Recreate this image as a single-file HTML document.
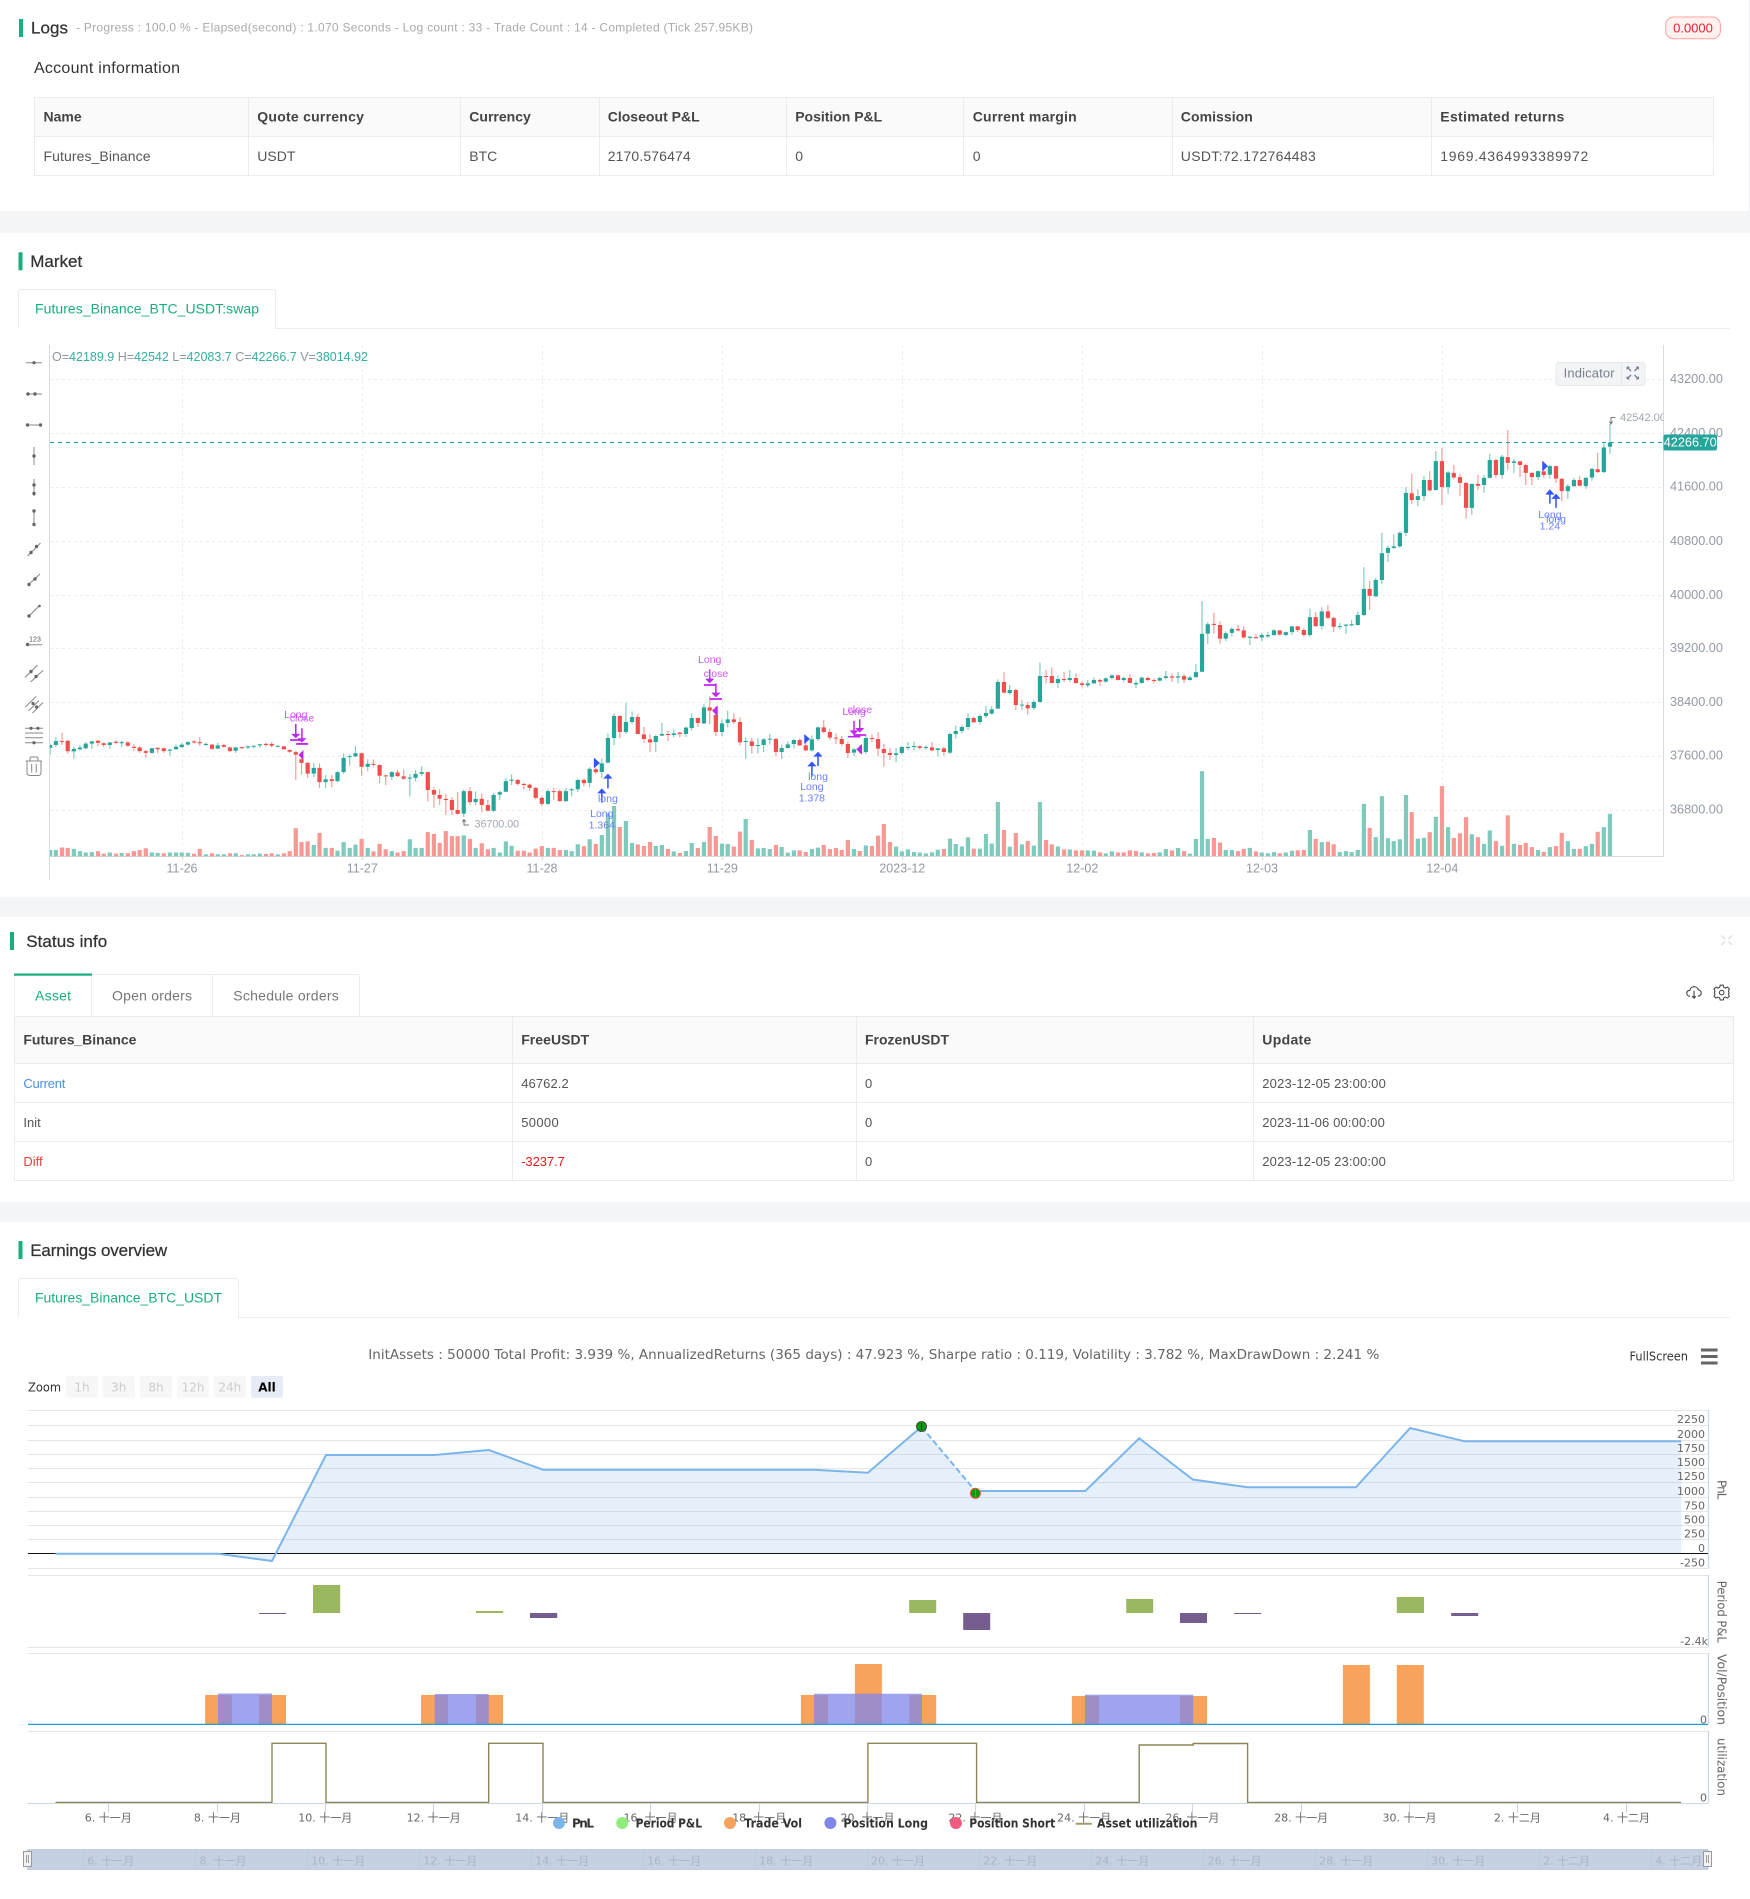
<!DOCTYPE html>
<html lang="en"><head><meta charset="utf-8"><title>Backtest</title>
<style>
html,body{margin:0;padding:0;background:#fff;width:1750px;height:1899px;overflow:hidden}
svg{display:block}
text{dominant-baseline:central;font-family:"Liberation Sans","Noto Sans CJK SC",sans-serif}
.h{font-family:"DejaVu Sans","Noto Sans CJK SC",sans-serif}
.t{font-size:17px;fill:#333;stroke:#333;stroke-width:.25px}
.th{font-size:14px;font-weight:700;fill:#444;transform:translateY(-.8px)}
.td{font-size:14px;fill:#555;transform:translateY(-.5px)}
.sd{font-size:13px;fill:#555}
.px{font-size:12.7px;fill:#929aa5}
.tk{font-size:12.5px;fill:#929aa5}
.sg{font-size:10.5px;text-anchor:middle}
.pu{fill:#cf55f5}.bl{fill:#6a80ff}
.yl{font-size:11px;fill:#666;text-anchor:end;transform:translateY(.6px)}
.xl{font-size:11px;fill:#666;text-anchor:middle}
.nl{font-size:11px;fill:#a9b4c7}
.lg{font-size:12px;font-weight:700;fill:#333}
.at{font-size:12px;fill:#666;text-anchor:middle}
.zb{font-size:12px;fill:#ccc;text-anchor:middle}
</style></head><body>
<svg width="1750" height="1899" viewBox="0 0 1750 1899" xmlns="http://www.w3.org/2000/svg">
<rect width="1750" height="1899" fill="#fff"/>
<rect y="212" width="1750" height="21" fill="#f4f5f7"/>
<rect y="897" width="1750" height="20" fill="#f4f5f7"/>
<rect y="1202" width="1750" height="20" fill="#f4f5f7"/>
<path d="M1749.5 0V212M0 212H1750" stroke="#eceef1" fill="none"/>

<!-- Logs -->
<rect x="19" y="19" width="4" height="18" fill="#1aae7f"/>
<text x="31" y="28" class="t" textLength="37">Logs</text>
<text x="76" y="27.5" font-size="12" fill="#aaa" textLength="677">- Progress : 100.0 % - Elapsed(second) : 1.070  Seconds - Log count : 33 - Trade Count : 14 - Completed (Tick 257.95KB)</text>
<rect x="1665.7" y="17" width="54.7" height="21.7" rx="8" fill="#fff1f0" stroke="#ffa39e"/>
<text x="1693" y="27.8" font-size="13" fill="#e8202f" text-anchor="middle">0.0000</text>
<text x="34" y="68.3" font-size="16" fill="#333" textLength="146">Account information</text>

<rect x="34.5" y="97.5" width="1679" height="39" fill="#fafafa"/>
<path d="M34.5 97.5H1713.5V175.5H34.5ZM34.5 136.5H1713.5M248.5 97.5V175.5M460.5 97.5V175.5M599.5 97.5V175.5M786.5 97.5V175.5M963.5 97.5V175.5M1172.5 97.5V175.5M1431.5 97.5V175.5" fill="none" stroke="#ececec"/>
<text x="43.5" y="117.3" class="th">Name</text>
<text x="257.3" y="117.3" class="th" textLength="106.6">Quote currency</text>
<text x="469.3" y="117.3" class="th">Currency</text>
<text x="607.7" y="117.3" class="th" textLength="92">Closeout P&amp;L</text>
<text x="795.2" y="117.3" class="th" textLength="87">Position P&amp;L</text>
<text x="972.7" y="117.3" class="th" textLength="104">Current margin</text>
<text x="1180.8" y="117.3" class="th" textLength="72">Comission</text>
<text x="1440.3" y="117.3" class="th" textLength="124">Estimated returns</text>
<text x="43.5" y="156.3" class="td" textLength="107">Futures_Binance</text>
<text x="257.3" y="156.3" class="td">USDT</text>
<text x="469.3" y="156.3" class="td">BTC</text>
<text x="607.7" y="156.3" class="td" textLength="83">2170.576474</text>
<text x="795.2" y="156.3" class="td">0</text>
<text x="972.7" y="156.3" class="td">0</text>
<text x="1180.8" y="156.3" class="td" textLength="135">USDT:72.172764483</text>
<text x="1440.3" y="156.3" class="td" textLength="148">1969.4364993389972</text>

<!-- Market -->
<rect x="18.5" y="252.3" width="4" height="18" fill="#1aae7f"/>
<text x="30.2" y="261.5" class="t" textLength="52">Market</text>
<path d="M18.5 328.5V292.5Q18.5 289.5 21.5 289.5H272.5Q275.5 289.5 275.5 292.5V328.5H1730" fill="none" stroke="#ececec"/>
<text x="35" y="308.6" font-size="14" fill="#1aae7f" textLength="224">Futures_Binance_BTC_USDT:swap</text>

<!-- chart grid -->
<path d="M50 379.5H1664M50 433.5H1664M50 487.5H1664M50 541.5H1664M50 595.5H1664M50 648.5H1664M50 702.5H1664M50 756.5H1664M50 810.5H1664M182.5 345V856M362.5 345V856M542.5 345V856M722.5 345V856M902.5 345V856M1082.5 345V856M1262.5 345V856M1442.5 345V856" stroke="#eeeeee" stroke-dasharray="3 3" fill="none"/>
<path d="M1663.5 345V856M50 856.5H1664" stroke="#d9dadd" fill="none"/>
<path d="M182.5 856V860M362.5 856V860M542.5 856V860M722.5 856V860M902.5 856V860M1082.5 856V860M1262.5 856V860M1442.5 856V860" stroke="#d9dadd"/>
<g text-anchor="middle">
<text x="182" y="868.6" class="tk">11-26</text><text x="362.3" y="868.6" class="tk">11-27</text><text x="542" y="868.6" class="tk">11-28</text><text x="722.3" y="868.6" class="tk">11-29</text><text x="902.3" y="868.6" class="tk">2023-12</text><text x="1082.3" y="868.6" class="tk">12-02</text><text x="1262" y="868.6" class="tk">12-03</text><text x="1442.3" y="868.6" class="tk">12-04</text>
</g>
<text x="1670" y="378.9" class="px">43200.00</text><text x="1670" y="432.9" class="px">42400.00</text><text x="1670" y="486.7" class="px">41600.00</text><text x="1670" y="541" class="px">40800.00</text><text x="1670" y="594.9" class="px">40000.00</text><text x="1670" y="647.8" class="px">39200.00</text><text x="1670" y="702.1" class="px">38400.00</text><text x="1670" y="755.7" class="px">37600.00</text><text x="1670" y="809.6" class="px">36800.00</text>

<!-- candles part 1 -->
<g transform="translate(0 340) scale(.38265 .35714)" fill="none">
<path stroke="#7fcabd" stroke-width="11" d="M131 1446V1428M146 1446V1428M193 1446V1425M209 1446V1431M224 1446V1435M240 1446V1434M287 1446V1435M318 1446V1436M397 1446V1435M412 1446V1436M444 1446V1435M460 1446V1435M475 1446V1435M491 1446V1436M538 1446V1440M569 1446V1440M585 1446V1440M616 1446V1437M648 1446V1440M663 1446V1440M679 1446V1438M726 1446V1440M820 1446V1414M851 1446V1422M882 1446V1430M898 1446V1406M914 1446V1422M929 1446V1413M961 1446V1422M1024 1446V1431M1071 1446V1398M1086 1446V1422M1102 1446V1422M1212 1446V1387M1243 1446V1422M1290 1446V1422M1306 1446V1435M1322 1446V1404M1337 1446V1416M1432 1446V1422M1479 1446V1428M1494 1446V1431M1510 1446V1412M1541 1446V1398"/>
<path stroke="#f69995" stroke-width="11" d="M162 1446V1421M177 1446V1422M256 1446V1431M271 1446V1438M303 1446V1438M334 1446V1437M350 1446V1431M365 1446V1428M381 1446V1423M428 1446V1437M507 1446V1438M522 1446V1425M554 1446V1437M601 1446V1437M632 1446V1442M695 1446V1439M710 1446V1437M742 1446V1437M757 1446V1431M773 1446V1367M788 1446V1406M804 1446V1404M835 1446V1380M867 1446V1422M945 1446V1397M976 1446V1432M992 1446V1411M1008 1446V1426M1039 1446V1435M1055 1446V1431M1118 1446V1378M1134 1446V1383M1149 1446V1408M1165 1446V1375M1181 1446V1389M1196 1446V1389M1228 1446V1397M1259 1446V1409M1275 1446V1426M1353 1446V1430M1369 1446V1430M1384 1446V1435M1400 1446V1424M1416 1446V1417M1447 1446V1422M1463 1446V1428M1526 1446V1417M1557 1446V1411"/>
<path stroke="#7fcabd" stroke-width="3" d="M131 1130V1162M146 1112V1140M193 1140V1172M209 1134V1150M224 1126V1146M240 1122V1145M287 1126V1144M318 1122V1140M397 1142V1158M444 1145V1165M460 1133V1148M475 1128V1141M491 1123V1136M538 1128V1137M569 1128V1146M616 1139V1156M648 1136V1146M663 1135V1144M679 1131V1142M726 1135V1141M820 1184V1224M851 1218V1254M882 1207V1238M898 1158V1214M914 1160V1192M929 1137V1168M961 1174V1207M1024 1207V1232M1071 1216V1278M1086 1204V1236M1102 1193V1220M1212 1258V1336M1243 1264V1302M1290 1268V1322M1306 1262V1288M1322 1226V1266M1337 1216V1246M1432 1258V1302M1479 1254V1294M1494 1254V1278M1510 1228V1266M1541 1196V1252"/>
<path stroke="#f69995" stroke-width="3" d="M162 1100V1134M177 1120V1158M256 1120V1138M271 1127V1140M303 1122V1132M334 1123V1139M350 1132V1150M365 1138V1156M381 1148V1170M412 1140V1156M428 1141V1156M507 1120V1130M522 1112V1136M554 1131V1148M585 1131V1142M601 1138V1154M632 1140V1146M695 1128V1138M710 1126V1140M742 1136V1148M757 1146V1156M773 1150V1232M788 1170V1216M804 1182V1226M835 1186V1254M867 1218V1252M945 1155V1221M976 1174V1195M992 1188V1240M1008 1218V1246M1039 1204V1224M1055 1202V1232M1118 1208V1292M1134 1252V1310M1149 1258V1302M1165 1270V1330M1181 1280V1330M1196 1266V1329M1228 1252V1302M1259 1270V1322M1275 1288V1320M1353 1228V1248M1369 1240V1258M1384 1242V1262M1400 1252V1286M1416 1278V1306M1447 1254V1288M1463 1258V1292M1526 1226V1250M1557 1198V1216"/>
<path stroke="#26a69a" stroke-width="11" d="M131 1134V1142M146 1123V1134M193 1145V1152M209 1141V1146M224 1130V1143M240 1124V1130M287 1127V1134M318 1126V1129M397 1143V1156M444 1147V1150M460 1139V1146M475 1133V1140M491 1126V1133M538 1131V1134M569 1135V1144M616 1141V1150M648 1138V1141M663 1136V1139M679 1132V1135M726 1136V1139M820 1198V1214M851 1230V1238M882 1210V1235M898 1170V1210M914 1165V1168M929 1157V1166M961 1187V1195M1024 1210V1223M1071 1225V1228M1086 1215V1226M1102 1210V1215M1212 1263V1326M1243 1285V1294M1290 1274V1318M1306 1266V1273M1322 1235V1265M1337 1231V1234M1432 1263V1299M1479 1263V1291M1494 1258V1261M1510 1232V1258M1541 1201V1240"/>
<path stroke="#ef4f4c" stroke-width="11" d="M162 1123V1126M177 1122V1151M256 1122V1128M271 1129V1134M303 1125V1128M334 1127V1136M350 1139V1142M365 1141V1151M381 1151V1156M412 1142V1146M428 1143V1151M507 1124V1127M522 1126V1129M554 1133V1145M585 1134V1139M601 1141V1151M632 1140V1143M695 1131V1134M710 1131V1136M742 1138V1146M757 1148V1153M773 1154V1161M788 1174V1184M804 1184V1214M835 1198V1238M867 1230V1235M945 1157V1195M976 1187V1190M992 1190V1220M1008 1219V1222M1039 1211V1221M1055 1222V1228M1118 1210V1260M1134 1260V1273M1149 1274V1284M1165 1285V1288M1181 1288V1316M1196 1316V1327M1228 1263V1294M1259 1285V1302M1275 1302V1318M1353 1232V1243M1369 1243V1246M1384 1245V1254M1400 1254V1282M1416 1282V1299M1447 1263V1266M1463 1263V1291M1526 1232V1241M1557 1202V1210"/>
<path stroke="#c026ee" stroke-width="4" d="M773 1075V1105M789 1087V1117"/><path stroke="#c026ee" stroke-width="5" d="M758 1120H790M774 1131H805"/>
<path fill="#c026ee" d="M761 1103H785L773 1115ZM777 1115H801L789 1127ZM780 1162L793 1148V1176Z"/>
<path fill="#3355ff" d="M1552 1169L1566 1184L1552 1199Z"/>
</g>

<!-- candles part 2 -->
<g transform="translate(580 600) scale(.38265 .33333)" fill="none">
<path stroke="#7fcabd" stroke-width="11" d="M57 768V705M73 768V640M89 768V618M120 768V663M136 768V729M198 768V738M214 768V735M245 768V754M277 768V753M292 768V729M324 768V726M371 768V731M386 768V732M433 768V657M465 768V745M480 768V744M496 768V747M527 768V741M543 768V758M559 768V751M606 768V747M622 768V743M716 768V747M747 768V736M826 768V740M841 768V754M857 768V748M873 768V756M888 768V758M904 768V760M920 768V757M935 768V749M967 768V716M982 768V732M998 768V739M1014 768V712M1045 768V746M1061 768V702M1076 768V731M1092 768V606M1123 768V740M1155 768V733M1186 768V737M1202 768V606M1249 768V739M1280 768V748M1327 768V751M1343 768V752M1374 768V760M1390 768V754M1468 768V757M1515 768V757M1531 768V747M1563 768V744"/>
<path stroke="#f69995" stroke-width="11" d="M104 768V681M151 768V733M167 768V738M183 768V726M230 768V747M261 768V759M308 768V744M339 768V681M355 768V708M402 768V740M418 768V695M449 768V720M512 768V735M574 768V751M590 768V756M637 768V735M653 768V747M669 768V744M684 768V750M700 768V720M731 768V753M763 768V738M779 768V707M794 768V672M810 768V726M951 768V747M1029 768V746M1108 768V690M1139 768V699M1170 768V723M1218 768V720M1233 768V733M1265 768V748M1296 768V751M1312 768V751M1359 768V757M1406 768V757M1421 768V757M1437 768V751M1453 768V753M1484 768V760M1500 768V759M1547 768V751"/>
<path stroke="#7fcabd" stroke-width="3" d="M57 475V535M73 400V490M89 340V435M120 308V402M136 334V372M198 405V456M214 369V408M245 388V412M277 380V411M292 340V392M324 312V372M371 358V408M386 332V382M433 412V476M465 414V460M480 414V456M496 402V434M527 434V477M543 424V446M559 417V445M606 406V455M622 380V423M716 444V468M747 404V462M826 444V486M841 437V464M857 426V450M873 424V452M904 436V450M935 445V470M967 398V462M982 376V416M998 376V400M1014 340V390M1045 343V374M1061 318V354M1076 318V344M1092 238V326M1123 255V284M1155 300V330M1186 300V330M1202 188V308M1249 226V264M1280 210V246M1327 240V262M1343 232V252M1374 232V248M1390 224V238M1421 230V246M1453 242V264M1468 230V250M1515 230V244M1531 213V238M1563 216V250"/>
<path stroke="#f69995" stroke-width="3" d="M104 345V415M151 342V402M167 381V428M183 403V456M230 393V423M261 396V412M308 352V381M339 288V372M355 320V408M402 340V372M418 352V436M449 414V460M512 414V468M574 416V438M590 418V454M637 360V400M653 386V420M669 400V432M684 408V438M700 425V474M731 435V460M763 403V426M779 396V468M794 432V500M810 444V480M888 436V448M920 426V454M951 440V468M1029 350V368M1108 216V280M1139 266V330M1170 306V344M1218 210V250M1233 202V250M1265 216V246M1296 220V252M1312 244V262M1359 236V258M1406 224V242M1437 222V250M1484 230V244M1500 235V250M1547 220V246"/>
<path stroke="#26a69a" stroke-width="11" d="M57 490V516M73 414V488M89 348V414M120 366V396M136 351V366M198 408V426M214 402V407M245 400V405M277 383V402M292 354V384M324 322V370M371 370V396M386 358V369M433 423V426M465 435V438M480 418V435M496 416V419M527 444V456M543 433V444M559 420V432M606 418V451M622 382V417M716 448V458M747 414V456M826 460V465M841 441V459M857 441V444M873 438V441M904 441V444M935 445V450M967 402V458M982 393V402M998 381V393M1014 354V381M1045 348V366M1061 339V348M1076 328V341M1092 246V326M1123 270V279M1155 314V317M1186 306V324M1202 228V306M1249 237V249M1280 234V240M1327 250V256M1343 240V250M1374 235V245M1390 226V234M1421 234V240M1453 249V253M1468 233V249M1515 234V242M1531 229V234M1563 229V233"/>
<path stroke="#ef4f4c" stroke-width="11" d="M104 348V396M151 351V402M167 403V417M183 418V427M230 402V405M261 398V402M308 354V369M339 322V332M355 345V396M402 358V366M418 366V427M449 424V438M512 417V456M574 420V436M590 436V451M637 382V396M653 396V413M669 413V416M684 417V432M700 432V459M731 445V448M763 414V417M779 417V446M794 447V459M810 459V465M888 439V444M920 442V451M951 445V456M1029 354V367M1108 246V278M1139 270V315M1170 315V325M1218 228V231M1233 228V249M1265 237V240M1296 234V249M1312 250V255M1359 240V245M1406 226V240M1437 234V249M1484 234V240M1500 240V243M1547 229V233"/>
<path stroke="#c026ee" stroke-width="4" d="M339 208V238M355 250V280M716 363V393M731 358V386"/><path stroke="#c026ee" stroke-width="5" d="M324 255H356M339 297H371M700 410H733M715 405H747"/>
<path fill="#c026ee" d="M327 236H351L339 250ZM343 278H367L355 292ZM704 391H728L716 405ZM719 384H743L731 398ZM345 332L360 316V349ZM722 448L737 432V464Z"/>
<path stroke="#3355ff" stroke-width="4" d="M73 533V565M57 577V608M622 467V498M606 496V530"/>
<path fill="#3355ff" d="M73 521L85 536H61ZM57 565L69 580H45ZM622 455L634 470H610ZM606 484L618 499H594ZM37 474L52 489L37 504ZM586 402L601 417L586 432Z"/>
</g>

<!-- candles part 3 -->
<g transform="translate(1150 340) scale(.38265 .35714)" fill="none">
<path stroke="#7fcabd" stroke-width="11" d="M104 1445V1438M120 1445V1397M136 1445V1207M151 1445V1397M198 1445V1428M214 1445V1428M261 1445V1422M292 1445V1435M308 1445V1437M324 1445V1434M355 1445V1435M371 1445V1430M418 1445V1372M449 1445V1406M496 1445V1434M512 1445V1431M527 1445V1434M543 1445V1428M559 1445V1299M590 1445V1392M606 1445V1277M622 1445V1395M637 1445V1403M653 1445V1398M669 1445V1274M700 1445V1396M716 1445V1394M747 1445V1335M779 1445V1364M841 1445V1384M873 1445V1411M888 1445V1373M920 1445V1416M951 1445V1411M1014 1445V1428M1045 1445V1420M1092 1445V1403M1108 1445V1425M1139 1445V1417M1155 1445V1411M1186 1445V1364M1202 1445V1327"/>
<path stroke="#f69995" stroke-width="11" d="M89 1445V1431M167 1445V1394M183 1445V1407M230 1445V1431M245 1445V1425M277 1445V1432M339 1445V1437M386 1445V1429M402 1445V1428M433 1445V1397M465 1445V1405M480 1445V1412M574 1445V1366M684 1445V1322M731 1445V1378M763 1445V1249M794 1445V1394M810 1445V1381M826 1445V1336M857 1445V1392M904 1445V1403M935 1445V1331M967 1445V1414M982 1445V1408M998 1445V1420M1029 1445V1433M1061 1445V1417M1076 1445V1380M1123 1445V1425M1170 1445V1377"/>
<path stroke="#7fcabd" stroke-width="3" d="M104 940V954M120 907V946M136 731V930M151 790V851M198 816V843M214 804V830M261 829V854M292 820V843M308 818V834M324 809V829M355 816V830M371 800V826M418 752V832M449 748V811M496 792V810M512 795V823M527 784V802M543 760V800M559 636V773M590 666V720M606 540V684M622 576V622M637 544V586M653 536V582M669 412V548M700 418V465M716 381V451M747 311V422M779 367V431M841 402V490M873 378V428M888 319V388M920 322V388M951 333V372M1014 366V392M1045 350V388M1092 404V445M1108 386V412M1139 384V417M1155 358V394M1186 288V372M1202 235V319"/>
<path stroke="#f69995" stroke-width="3" d="M89 935V960M167 764V822M183 788V851M230 798V816M245 802V836M277 823V836M339 813V828M386 800V818M402 806V831M433 762V804M465 742V782M480 776V818M574 675V756M684 375V458M731 367V424M763 302V462M794 350V390M810 375V437M826 398V500M857 378V420M904 332V386M935 252V364M967 338V384M982 346V406M998 370V406M1029 340V386M1061 352V400M1076 386V451M1123 381V410M1170 316V372"/>
<path stroke="#26a69a" stroke-width="11" d="M104 945V952M120 930V944M136 823V929M151 796V822M198 821V836M214 809V820M261 831V834M292 826V833M308 826V830M324 813V826M355 818V826M371 802V818M418 776V826M449 760V801M496 801V804M512 797V800M527 796V799M543 770V798M559 697V770M590 672V718M606 597V672M622 582V596M637 578V582M653 540V578M669 428V540M700 437V448M716 392V437M747 339V420M779 371V412M841 403V470M873 386V406M888 336V386M920 327V378M951 340V344M1014 367V384M1045 353V377M1092 409V423M1108 392V409M1139 386V409M1155 361V385M1186 301V370M1202 287V299"/>
<path stroke="#ef4f4c" stroke-width="11" d="M89 941V951M167 795V798M183 798V836M230 809V813M245 813V833M277 832V835M339 813V825M386 802V812M402 812V826M433 776V801M465 760V778M480 778V803M574 697V716M684 429V448M731 392V421M763 339V412M794 372V385M810 384V400M826 400V470M857 403V408M904 336V378M935 328V344M967 340V350M982 350V372M998 372V384M1029 368V378M1061 353V388M1076 389V423M1123 392V408M1170 362V370"/>
<path stroke="#3355ff" stroke-width="4" d="M1045 430V458M1061 442V470"/>
<path fill="#3355ff" d="M1045 418L1057 433H1033ZM1061 430L1073 445H1049ZM1025 338L1040 353L1025 368Z"/>
</g>

<!-- left axis covers overflow -->
<rect x="44" y="345" width="5.5" height="515" fill="#fff"/>
<path d="M49.5 345V880" stroke="#d9dadd" fill="none"/>

<!-- price marks & signal text -->
<path d="M50 442.5H1664" stroke="#26a69a" stroke-dasharray="4 4"/>
<rect x="1663.5" y="434.5" width="53.5" height="16" rx="2" fill="#26a69a"/>
<text x="1690.2" y="442.5" font-size="12.7" fill="#fff" text-anchor="middle">42266.70</text>
<path d="M1615.5 417.5H1611V423M1609.3 421.5L1611 424L1612.7 421.5" fill="none" stroke="#777"/>
<svg x="1620" y="410" width="43.5" height="16"><text x="0" y="8" font-size="11" fill="#a0a7b1">42542.00</text></svg>
<path d="M464 820V825H469M462.3 822L464 819.5L465.7 822" fill="none" stroke="#777"/>
<text x="474.5" y="824.3" font-size="10.7" fill="#a0a7b1">36700.00</text>
<text x="52" y="356.8" font-size="12.5" textLength="316"><tspan fill="#8d96a1">O=</tspan><tspan fill="#35ad9f">42189.9 </tspan><tspan fill="#8d96a1">H=</tspan><tspan fill="#35ad9f">42542 </tspan><tspan fill="#8d96a1">L=</tspan><tspan fill="#35ad9f">42083.7 </tspan><tspan fill="#8d96a1">C=</tspan><tspan fill="#35ad9f">42266.7 </tspan><tspan fill="#8d96a1">V=</tspan><tspan fill="#35ad9f">38014.92</tspan></text>
<rect x="1556" y="362.5" width="89" height="23" rx="3" fill="#f3f4f6" stroke="#e6e7ea"/>
<path d="M1621.5 363V385" stroke="#e6e7ea"/>
<text x="1563.6" y="373" font-size="13" fill="#76808f" textLength="51">Indicator</text>
<path d="M1627.5 367.5L1631 371M1638 367.5L1634.5 371M1627.5 378.5L1631 375M1638 378.5L1634.5 375" stroke="#76808f" stroke-width="1.4" fill="none"/>
<path d="M1627 367H1629.5M1627 367V369.5M1638.5 367H1636M1638.5 367V369.5M1627 379H1629.5M1627 379V376.5M1638.5 379H1636M1638.5 379V376.5" stroke="#76808f" stroke-width="1"/>

<text x="295.8" y="715" class="sg pu">Long</text><text x="302" y="718.6" class="sg pu">close</text>
<text x="709.7" y="660" class="sg pu">Long</text><text x="715.9" y="674" class="sg pu">close</text>
<text x="854" y="712" class="sg pu">Long</text><text x="859.8" y="710" class="sg pu">close</text>
<text x="607.9" y="799" class="sg bl">long</text><text x="601.8" y="814" class="sg bl">Long</text><text x="601.8" y="825.7" class="sg bl">1.364</text>
<text x="818" y="777" class="sg bl">long</text><text x="811.9" y="787" class="sg bl">Long</text><text x="811.9" y="798.3" class="sg bl">1.378</text>
<text x="1549.9" y="515" class="sg bl">Long</text><text x="1556" y="519.6" class="sg bl">long</text><text x="1549.9" y="526.4" class="sg bl">1.24</text>

<!-- toolbar icons -->
<g stroke="#888" stroke-width="1" fill="#666">
<path d="M26 362.7H42M26 394H42M26 425H42M34 447V465M34 479V496M34 510V526M27.5 556L40.5 543M28 585L40 574M28 617L40 605M28 644.7H42M25 677.5L37.5 665M30.6 682L43 670.4M25.5 707L36 696.5M28.5 711L39 700.5M32.5 713L43 702.5M25 728.3H43M25 733H43M25 737.7H43M25 742.7H43"/>
<g stroke="none">
<circle cx="34" cy="362.7" r="1.6"/><circle cx="28" cy="394" r="1.7"/><circle cx="35" cy="394" r="1.7"/><circle cx="27.5" cy="425" r="1.7"/><circle cx="40.5" cy="425" r="1.7"/><circle cx="34" cy="456" r="1.7"/><circle cx="34" cy="485" r="1.7"/><circle cx="34" cy="493.5" r="1.7"/><circle cx="34" cy="511" r="1.7"/><circle cx="34" cy="524.5" r="1.7"/><circle cx="31" cy="552.5" r="1.7"/><circle cx="36.5" cy="546.5" r="1.7"/><circle cx="29" cy="584.5" r="1.7"/><circle cx="35" cy="579" r="1.7"/><circle cx="29" cy="616" r="1.7"/><circle cx="39.5" cy="606" r="1.3"/><circle cx="27.5" cy="644.5" r="1.7"/><circle cx="31" cy="671.5" r="1.7"/><circle cx="36" cy="676.5" r="1.7"/><circle cx="33" cy="703.5" r="1.6"/><circle cx="36.5" cy="707" r="1.6"/><circle cx="31" cy="728.3" r="1.6"/><circle cx="38" cy="728.3" r="1.6"/><circle cx="34" cy="742.7" r="1.6"/>
</g>
<path fill="none" d="M25.6 761H42M30 761V758.5Q30 757 31.5 757H36.5Q38 757 38 758.5V761M27 761V772.5Q27 775.5 30 775.5H38Q41 775.5 41 772.5V761M31.7 764V772.5M36.3 764V772.5"/>
</g>
<text x="35" y="640" font-size="7" fill="#555" text-anchor="middle">123</text>

<!-- Status info -->
<rect x="10" y="932" width="4" height="18" fill="#1aae7f"/>
<text x="26.2" y="941.3" class="t" textLength="81">Status info</text>
<path d="M1721.5 935.5L1725 939M1732 935.5L1728.5 939M1721.5 945L1725 941.5M1732 945L1728.5 941.5" stroke="#ddd" stroke-width="1.3"/>
<path d="M14.5 1016V975M91.5 975V1016M212.5 975V1016M359.5 975V1016M91.5 974.5H359.5" stroke="#ececec" fill="none"/>
<rect x="14" y="973.5" width="78" height="2.2" fill="#1aae7f"/>
<text x="53" y="995.6" font-size="14" fill="#1aae7f" text-anchor="middle" textLength="36">Asset</text>
<text x="112" y="995.6" font-size="14" fill="#777" textLength="80">Open orders</text>
<text x="233.3" y="995.6" font-size="14" fill="#777" textLength="105.5">Schedule orders</text>
<g transform="translate(1694 992.3) scale(.86) translate(-1694 -992.3)">
<path d="M1698.5 996.8C1701 996.8 1702.4 995 1702.4 993C1702.4 991 1701 989.5 1699 989.4C1698.5 987.2 1696.5 985.8 1694.2 985.8C1691.5 985.8 1689.6 987.6 1689.2 990C1687 990.2 1685.6 991.6 1685.6 993.5C1685.6 995.4 1687 996.8 1689.4 996.8M1694 990.5V999M1691.8 996.8L1694 999.2L1696.2 996.8" fill="none" stroke="#444" stroke-width="1.3"/>
</g>
<g transform="translate(1721.7 992.5) scale(.88) translate(-1721.7 -992.5)">
<path d="M1720 984.2H1723.4L1724 986.6L1726 987.5L1728.2 986.3L1730.5 988.6L1729.3 990.8L1730.1 992.6L1730.1 992.8L1729.3 994.6L1730.5 996.6L1728.2 998.9L1726 997.7L1724 998.6L1723.4 1001H1720L1719.4 998.6L1717.4 997.7L1715.2 998.9L1712.9 996.6L1714.1 994.6L1713.3 992.6L1714.1 990.8L1712.9 988.6L1715.2 986.3L1717.4 987.5L1719.4 986.6Z" fill="none" stroke="#444" stroke-width="1.2"/>
<circle cx="1721.7" cy="992.6" r="2.6" fill="none" stroke="#444" stroke-width="1.2"/>
</g>

<rect x="14.5" y="1016.5" width="1719" height="47" fill="#fafafa"/>
<path d="M14.5 1016.5H1733.5V1180.5H14.5ZM14.5 1063.5H1733.5M14.5 1102.5H1733.5M14.5 1141.5H1733.5M512.5 1016.5V1180.5M856.5 1016.5V1180.5M1253.5 1016.5V1180.5" fill="none" stroke="#ececec"/>
<text x="23.4" y="1040.3" class="th" textLength="113">Futures_Binance</text>
<text x="521.2" y="1040.3" class="th" textLength="68">FreeUSDT</text>
<text x="865" y="1040.3" class="th" textLength="84">FrozenUSDT</text>
<text x="1262.3" y="1040.3" class="th" textLength="49">Update</text>
<text x="23.4" y="1083.7" class="sd" style="fill:#4a90e2" textLength="42">Current</text>
<text x="521.2" y="1083.7" class="sd" textLength="47.5">46762.2</text>
<text x="865" y="1083.7" class="sd">0</text>
<text x="1262.3" y="1083.7" class="sd" textLength="123.5">2023-12-05 23:00:00</text>
<text x="23.4" y="1122.7" class="sd">Init</text>
<text x="521.2" y="1122.7" class="sd" textLength="37.5">50000</text>
<text x="865" y="1122.7" class="sd">0</text>
<text x="1262.3" y="1122.7" class="sd" textLength="122.5">2023-11-06 00:00:00</text>
<text x="23.4" y="1161.7" class="sd" style="fill:#e0453a">Diff</text>
<text x="521.2" y="1161.7" class="sd" style="fill:#f01818" textLength="43.5">-3237.7</text>
<text x="865" y="1161.7" class="sd">0</text>
<text x="1262.3" y="1161.7" class="sd" textLength="123.5">2023-12-05 23:00:00</text>

<!-- Earnings -->
<rect x="18.5" y="1241" width="4" height="18" fill="#1aae7f"/>
<text x="30.2" y="1250.7" class="t" textLength="137">Earnings overview</text>
<path d="M18.5 1317.5V1281.5Q18.5 1278.5 21.5 1278.5H235.5Q238.5 1278.5 238.5 1281.5V1317.5H1730" fill="none" stroke="#ececec"/>
<text x="35" y="1297.6" font-size="14" fill="#1aae7f" textLength="187">Futures_Binance_BTC_USDT</text>
<text x="368.3" y="1355" font-size="13.5" fill="#666" class="h" textLength="1011" lengthAdjust="spacingAndGlyphs">InitAssets : 50000 Total Profit: 3.939 %, AnnualizedReturns (365 days) : 47.923 %, Sharpe ratio : 0.119, Volatility : 3.782 %, MaxDrawDown : 2.241 %</text>
<text x="1629.5" y="1356.7" font-size="12" fill="#333" class="h" textLength="58.5" lengthAdjust="spacingAndGlyphs">FullScreen</text>
<path d="M1701 1350H1717.6M1701 1356.5H1717.6M1701 1363H1717.6" stroke="#666" stroke-width="3"/>
<text x="28" y="1387.7" font-size="12" fill="#333" class="h" textLength="33" lengthAdjust="spacingAndGlyphs">Zoom</text>
<g fill="#f7f7f7"><rect x="65.8" y="1376" width="32.4" height="21.7" rx="2"/><rect x="102.7" y="1376" width="32.3" height="21.7" rx="2"/><rect x="140" y="1376" width="32" height="21.7" rx="2"/><rect x="177" y="1376" width="32" height="21.7" rx="2"/><rect x="213.7" y="1376" width="32.3" height="21.7" rx="2"/><rect x="251" y="1376" width="32" height="21.7" rx="2" fill="#e6ebf5"/></g>
<text x="82" y="1387.7" class="zb h">1h</text><text x="118.8" y="1387.7" class="zb h">3h</text><text x="156" y="1387.7" class="zb h">8h</text><text x="193" y="1387.7" class="zb h">12h</text><text x="229.8" y="1387.7" class="zb h">24h</text><text x="267" y="1387.7" class="zb h" style="fill:#000;font-weight:700">All</text>

<!-- PnL panel -->
<path d="M28 1410.5H1708.5M28 1425.5H1708.5M28 1440.5H1708.5M28 1454.5H1708.5M28 1468.5H1708.5M28 1482.5H1708.5M28 1497.5H1708.5M28 1511.5H1708.5M28 1525.5H1708.5M28 1539.5H1708.5M28 1568.5H1708.5M28 1575.5H1708.5M28 1647.5H1708.5M28 1653.5H1708.5M28 1731.5H1708.5" stroke="#e6e6e6"/>
<path d="M55.5 1553.7L218 1553.7L272 1561L326 1455L434.4 1455L488.7 1450L543 1469.7L813.5 1469.7L867.9 1472.7L921.5 1426.7L975.4 1491L1085.3 1491L1139.2 1438.3L1192.8 1479.5L1247.6 1487.3L1355.9 1487.3L1410.2 1428L1464.6 1441.3L1681.2 1441.3V1553.7Z" fill="#7cb5ec" fill-opacity=".2"/>
<path d="M28 1553.5H1708" stroke="#111" stroke-width="1"/>
<path d="M55.5 1553.7L218 1553.7L272 1561L326 1455L434.4 1455L488.7 1450L543 1469.7L813.5 1469.7L867.9 1472.7L921.5 1426.7" fill="none" stroke="#7cb5ec" stroke-width="2"/>
<path d="M921.5 1426.7L975.4 1491" fill="none" stroke="#7cb5ec" stroke-width="2" stroke-dasharray="6 3"/>
<path d="M975.4 1491L1085.3 1491L1139.2 1438.3L1192.8 1479.5L1247.6 1487.3L1355.9 1487.3L1410.2 1428L1464.6 1441.3L1681.2 1441.3" fill="none" stroke="#7cb5ec" stroke-width="2"/>
<circle cx="921.5" cy="1426.5" r="5" fill="#0a9a0a" stroke="#333" stroke-width=".8"/><path d="M921.5 1423V1430" stroke="#222"/>
<circle cx="975.4" cy="1493.3" r="5" fill="#0a9a0a" stroke="#f25540" stroke-width="1"/><path d="M975.4 1489V1497" stroke="#f25540"/>
<text x="1705" y="1419" class="yl h">2250</text><text x="1705" y="1434" class="yl h">2000</text><text x="1705" y="1448" class="yl h">1750</text><text x="1705" y="1462" class="yl h">1500</text><text x="1705" y="1476" class="yl h">1250</text><text x="1705" y="1491" class="yl h">1000</text><text x="1705" y="1505.3" class="yl h">750</text><text x="1705" y="1519.3" class="yl h">500</text><text x="1705" y="1533.3" class="yl h">250</text><text x="1705" y="1548" class="yl h">0</text><text x="1705" y="1562.3" class="yl h">-250</text>
<text x="1708" y="1640.7" class="yl h">-2.4k</text><text x="1707" y="1719.3" class="yl h">0</text><text x="1707" y="1797.3" class="yl h">0</text>
<path d="M1708.5 1410V1568M1708.5 1575V1647M1708.5 1653V1724M1708.5 1731V1803" stroke="#ccd6eb" stroke-width="1.2"/>
<text class="at h" transform="translate(1721.4 1489.7) rotate(90)" textLength="19.5">PnL</text>
<text class="at h" transform="translate(1721.4 1611.8) rotate(90)" textLength="62" lengthAdjust="spacingAndGlyphs">Period P&amp;L</text>
<text class="at h" transform="translate(1721.4 1689.5) rotate(90)" textLength="71" lengthAdjust="spacingAndGlyphs">Vol/Position</text>
<text class="at h" transform="translate(1721.4 1767) rotate(90)" textLength="58" lengthAdjust="spacingAndGlyphs">utilization</text>

<!-- period pnl -->
<g fill="#9ab85f"><rect x="313" y="1585" width="27.2" height="28"/><rect x="476" y="1611" width="27.2" height="2"/><rect x="909.2" y="1600" width="27" height="13"/><rect x="1126.2" y="1599" width="27" height="14"/><rect x="1396.8" y="1597" width="27.2" height="16"/></g>
<g fill="#755d8f"><rect x="259" y="1613" width="27" height="1"/><rect x="530" y="1613" width="27.2" height="5"/><rect x="963.2" y="1613" width="27" height="17"/><rect x="1180" y="1613" width="27" height="10"/><rect x="1234.2" y="1613" width="27" height="1"/><rect x="1451.2" y="1613" width="27" height="3"/></g>

<!-- vol/position -->
<g fill="#f7a35c"><rect x="205.1" y="1695" width="27" height="30"/><rect x="259" y="1695" width="27" height="30"/><rect x="421" y="1695" width="27" height="30"/><rect x="476" y="1695" width="27" height="30"/><rect x="800.9" y="1695" width="27" height="30"/><rect x="854.9" y="1664" width="27" height="61"/><rect x="909.2" y="1695" width="27" height="30"/><rect x="1071.9" y="1696" width="27" height="29"/><rect x="1180" y="1696" width="27" height="29"/><rect x="1342.9" y="1665" width="27" height="60"/><rect x="1396.8" y="1665" width="27" height="60"/></g>
<g fill="#8085e9" fill-opacity=".75"><rect x="218" y="1693.5" width="54" height="31.5"/><rect x="434.7" y="1694" width="54" height="31"/><rect x="813.9" y="1693.7" width="108" height="31.3"/><rect x="1084.9" y="1694.7" width="108.3" height="30.3"/></g>
<path d="M28 1724.4H1708" stroke="#1aa0d8" stroke-width="1.3"/>

<!-- utilization -->
<path d="M55.5 1802.5H272V1743.3H326V1802.5H488.7V1743.3H543V1802.5H867.9V1743.3H976.6V1802.5H1139.2V1745H1193.2V1743.5H1247.6V1802.5H1681" fill="none" stroke="#8d8655" stroke-width="1.4"/>
<path d="M28 1803.5H1708.5M108.5 1803V1812.7M217.5 1803V1812.7M325.5 1803V1812.7M433.5 1803V1812.7M542.5 1803V1812.7M650.5 1803V1812.7M759.5 1803V1812.7M867.5 1803V1812.7M975.5 1803V1812.7M1084.5 1803V1812.7M1192.5 1803V1812.7M1301.5 1803V1812.7M1409.5 1803V1812.7M1517.5 1803V1812.7M1626.5 1803V1812.7" stroke="#ccd6eb" fill="none"/>
<text x="108.3" y="1818" class="xl h">6. 十一月</text><text x="217.4" y="1818" class="xl h">8. 十一月</text><text x="325.3" y="1818" class="xl h">10. 十一月</text><text x="433.6" y="1818" class="xl h">12. 十一月</text><text x="542.3" y="1818" class="xl h">14. 十一月</text><text x="650.5" y="1818" class="xl h">16. 十一月</text><text x="759.2" y="1818" class="xl h">18. 十一月</text><text x="867.5" y="1818" class="xl h">20. 十一月</text><text x="975.4" y="1818" class="xl h">22. 十一月</text><text x="1084.1" y="1818" class="xl h">24. 十一月</text><text x="1192.4" y="1818" class="xl h">26. 十一月</text><text x="1301.2" y="1818" class="xl h">28. 十一月</text><text x="1409.5" y="1818" class="xl h">30. 十一月</text><text x="1517.4" y="1818" class="xl h">2. 十二月</text><text x="1626.5" y="1818" class="xl h">4. 十二月</text>

<!-- legend -->
<circle cx="559" cy="1823" r="6" fill="#7cb5ec"/><text x="572" y="1823.3" class="lg h" textLength="22">PnL</text>
<circle cx="622.2" cy="1823" r="6" fill="#90ed7d"/><text x="635.6" y="1823.3" class="lg h" textLength="66.4" lengthAdjust="spacingAndGlyphs">Period P&amp;L</text>
<circle cx="730" cy="1823" r="6" fill="#f7a35c"/><text x="744.3" y="1823.3" class="lg h" textLength="57.7" lengthAdjust="spacingAndGlyphs">Trade Vol</text>
<circle cx="830.4" cy="1823" r="6" fill="#8085e9"/><text x="843.4" y="1823.3" class="lg h" textLength="84.6" lengthAdjust="spacingAndGlyphs">Position Long</text>
<circle cx="955.9" cy="1823" r="6" fill="#f15c80"/><text x="969.3" y="1823.3" class="lg h" textLength="86" lengthAdjust="spacingAndGlyphs">Position Short</text>
<path d="M1075.7 1823.7H1091.8" stroke="#a09a6e" stroke-width="2"/><text x="1097" y="1823.3" class="lg h" textLength="100.5" lengthAdjust="spacingAndGlyphs">Asset utilization</text>

<!-- navigator -->
<rect x="27.6" y="1849.5" width="1680.4" height="20" fill="#c5d1e3" stroke="#b9c5d8" stroke-width=".8"/>
<path d="M83.5 1850V1869M195.5 1850V1869M307.5 1850V1869M419.5 1850V1869M531.5 1850V1869M643.5 1850V1869M755.5 1850V1869M867.5 1850V1869M979.5 1850V1869M1091.5 1850V1869M1203.5 1850V1869M1315.5 1850V1869M1427.5 1850V1869M1539.5 1850V1869M1651.5 1850V1869" stroke="#bccadd"/>
<text x="87.3" y="1861" class="nl h">6. 十一月</text><text x="199.5" y="1861" class="nl h">8. 十一月</text><text x="311.3" y="1861" class="nl h">10. 十一月</text><text x="423.3" y="1861" class="nl h">12. 十一月</text><text x="535.2" y="1861" class="nl h">14. 十一月</text><text x="647.2" y="1861" class="nl h">16. 十一月</text><text x="759.3" y="1861" class="nl h">18. 十一月</text><text x="871" y="1861" class="nl h">20. 十一月</text><text x="983.3" y="1861" class="nl h">22. 十一月</text><text x="1095.3" y="1861" class="nl h">24. 十一月</text><text x="1207.5" y="1861" class="nl h">26. 十一月</text><text x="1319.3" y="1861" class="nl h">28. 十一月</text><text x="1431.3" y="1861" class="nl h">30. 十一月</text><text x="1543.2" y="1861" class="nl h">2. 十二月</text><text x="1655.3" y="1861" class="nl h">4. 十二月</text>
<rect x="23.5" y="1851.5" width="8" height="15" fill="#f2f2f2" stroke="#999"/><path d="M26.5 1855V1863M28.5 1855V1863" stroke="#999"/>
<rect x="1703.5" y="1851.5" width="8" height="15" fill="#f2f2f2" stroke="#999"/><path d="M1706.5 1855V1863M1708.5 1855V1863" stroke="#999"/>
</svg>
</body></html>
